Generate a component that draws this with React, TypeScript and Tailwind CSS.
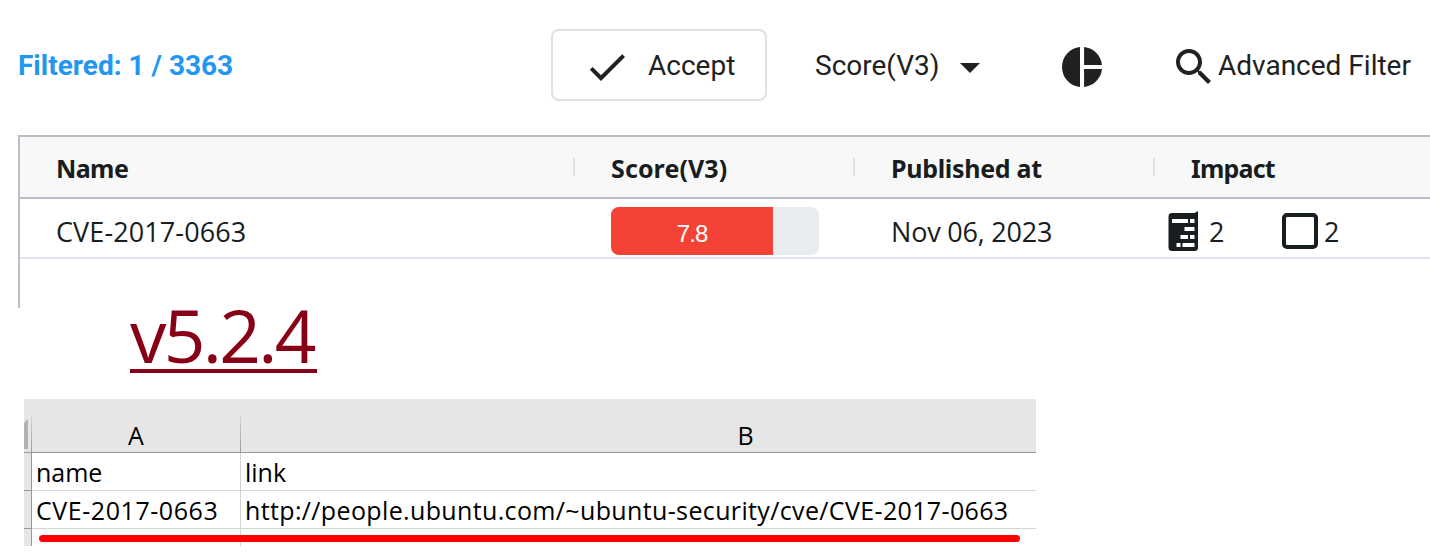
import type { ReactNode } from "react";

function MaterialIcon({ d, className = "" }: { d: string; className?: string }) {
  return (
    <svg viewBox="0 0 24 24" className={`mt-1 size-12 shrink-0 fill-[#212121] ${className}`}>
      <path d={d} />
    </svg>
  );
}

function Toolbar() {
  return (
    <div className="flex h-[130px] items-center pl-[18px] font-['Roboto',sans-serif] text-[28px] leading-8 text-[#212121]">
      <div className="w-[533px] pt-[2px] font-bold">
        <span className="text-[#2196f3]">Filtered: 1 / 3363</span>
      </div>
      <button className="flex h-[72px] w-[216px] items-center rounded-lg border-2 border-[#e0e0e0] pl-[30px]">
        <MaterialIcon d="M9 16.17L4.83 12l-1.42 1.41L9 19 21 7l-1.41-1.41z" />
        <span className="ml-[17px] pt-[2px]">Accept</span>
      </button>
      <div className="ml-[48px] flex w-[243px] items-center">
        <span className="w-[131px] pt-[2px]">Score(V3)</span>
        <MaterialIcon d="M7 10l5 5 5-5z" />
      </div>
      <MaterialIcon d="M11 2v20c-5.07-.5-9-4.79-9-10s3.93-9.5 9-10zm2.03 0v8.99H22c-.47-4.74-4.24-8.52-8.97-8.99zm0 11.01V22c4.74-.47 8.5-4.25 8.97-8.99h-8.97z" />
      <div className="ml-[64px] flex items-center whitespace-nowrap">
        <MaterialIcon d="M15.5 14h-.79l-.28-.27C15.41 12.59 16 11.11 16 9.5 16 5.91 13.09 3 9.5 3S3 5.91 3 9.5 5.91 16 9.5 16c1.61 0 3.09-.59 4.23-1.57l.27.28v.79l5 4.99L20.49 19l-4.99-5zm-6 0C7.01 14 5 11.99 5 9.5S7.01 5 9.5 5 14 7.01 14 9.5 11.99 14 9.5 14z" />
        <span className="pt-[2px]">Advanced Filter</span>
      </div>
    </div>
  );
}

function HeaderCell({ children, className, divider = true }: { children: ReactNode; className: string; divider?: boolean }) {
  return (
    <div className={`flex items-center justify-between whitespace-nowrap ${className}`}>
      <span className="pt-[3px]">{children}</span>
      {divider && <span className="h-[18px] w-[2px] bg-[#dde2eb]" />}
    </div>
  );
}

function ServerIcon() {
  return (
    <svg viewBox="0 0 31 40" className="mt-[5px] h-[40px] w-[31px] shrink-0">
      <path d="M4 2H26.5L30 0V36.5Q30 40 26.5 40H4Q0.5 40 0.5 36V6Q0.5 2 4 2Z" fill="#181d1f" />
      <path
        d="M4 8H20V12H4ZM22 8H26.5V12H22ZM16.5 16H26.5V20H16.5ZM12.5 24H20V28H12.5ZM22 24H26.5V28H22ZM8.5 32H12.5V36H8.5ZM14.5 32H26.5V36H14.5Z"
        fill="#fff"
      />
    </svg>
  );
}

function VulnerabilityTable() {
  return (
    <div className="mt-[5px] ml-[18px] h-[173px] border-t-2 border-l-2 border-[#babfc7] font-['Open_Sans',sans-serif] text-[#181d1f]">
      <div className="flex h-[62px] border-b-2 border-[#babfc7] bg-[#f8f8f8] font-['Noto_Sans',sans-serif] text-[25px] font-bold">
        <HeaderCell className="w-[555px] pl-[36px] tracking-[-0.6px]">Name</HeaderCell>
        <HeaderCell className="w-[280px] pl-[36px] tracking-[0.1px]">Score(V3)</HeaderCell>
        <HeaderCell className="w-[300px] pl-[36px] tracking-[-0.3px]">Published at</HeaderCell>
        <HeaderCell className="w-[275px] pl-[36px] tracking-[-0.8px]" divider={false}>Impact</HeaderCell>
      </div>
      <div className="flex h-[60px] items-center border-b-2 border-[#dde2eb] text-[27px] tracking-[0.1px] whitespace-nowrap">
        <div className="w-[555px] pt-[9px] pl-[36px]">CVE-2017-0663</div>
        <div className="w-[280px] pl-[36px]">
          <div className="mt-[6px] h-[48px] w-[208px] overflow-hidden rounded-lg bg-[#e9ecef]">
            <div className="flex h-full w-[78%] items-center justify-center bg-[#f44336] pt-[6px] font-['Liberation_Sans',sans-serif] text-[24px] tracking-[-0.8px] text-white">
              <span>7.8</span>
            </div>
          </div>
        </div>
        <div className="w-[300px] pt-[9px] pl-[36px] tracking-[-0.2px]">Nov 06, 2023</div>
        <div className="flex items-center pl-[13px]">
          <ServerIcon />
          <span className="w-[83px] pt-[9px] pl-[10px]">2</span>
          <span className="mt-[6px] size-[36px] rounded-[5px] border-4 border-[#181d1f]" />
          <span className="pt-[9px] pl-[6px]">2</span>
        </div>
      </div>
    </div>
  );
}

function Sheet() {
  return (
    <div className="relative mt-[26px] ml-[24px] h-[147px] w-[1012px] font-['Open_Sans',sans-serif] text-[25px] leading-[38px] whitespace-nowrap text-black">
      <div className="flex h-[54px] border-b border-[#999999] bg-[#e6e6e6]">
        <div className="flex w-[8px] justify-between">
          <svg viewBox="0 0 4 30" className="mt-[20px] h-[30px] w-[4px] fill-[#b1b1b1]">
            <path d="M0 4L4 0V30H0Z" />
          </svg>
          <div className="mt-[16px] w-px bg-gradient-to-b from-[#d8d8d8] to-[#9b9b9b]" />
        </div>
        <div className="flex w-[209px] justify-end">
          <div className="flex-1 pt-[17px] text-center">A</div>
          <div className="mt-[16px] w-px bg-gradient-to-b from-[#d8d8d8] to-[#9b9b9b]" />
        </div>
        <div className="flex-1 pt-[17px] pl-[214px] text-center">B</div>
      </div>
      <SheetRow className="h-[38px]" name="name" link="link" />
      <SheetRow
        className="h-[38px] tracking-[0.36px]"
        name={<span className="tracking-[0.56px]">CVE-2017-0663</span>}
        link="http://people.ubuntu.com/~ubuntu-security/cve/CVE-2017-0663"
      />
      <SheetRow className="h-[17px]" last />
      <div className="absolute top-[136px] left-[15px] h-[7px] w-[981px] rounded-full bg-[#ff0000]" />
    </div>
  );
}

function SheetRow({ name, link, className, last = false }: { name?: ReactNode; link?: string; className: string; last?: boolean }) {
  const line = last ? "" : "border-b";
  return (
    <div className={`flex ${className}`}>
      <div className={`w-[8px] border-r border-[#999999] bg-[#e6e6e6] ${line}`} />
      <div className={`w-[209px] border-r border-[#d4d4d4] pl-[4px] ${line}`}>{name}</div>
      <div className={`flex-1 border-[#d4d4d4] pl-[4px] ${line}`}>{link}</div>
    </div>
  );
}

export default function App() {
  return (
    <main className="h-[555px] w-[1430px] overflow-hidden bg-white">
      <Toolbar />
      <VulnerabilityTable />
      <div className="ml-[130px] h-[65px] w-[187px] border-b-4 border-[#880015] font-['Open_Sans',sans-serif] text-[73px] leading-[54px] tracking-[-2.7px] text-[#880015]">
        v5.2.4
      </div>
      <Sheet />
    </main>
  );
}
